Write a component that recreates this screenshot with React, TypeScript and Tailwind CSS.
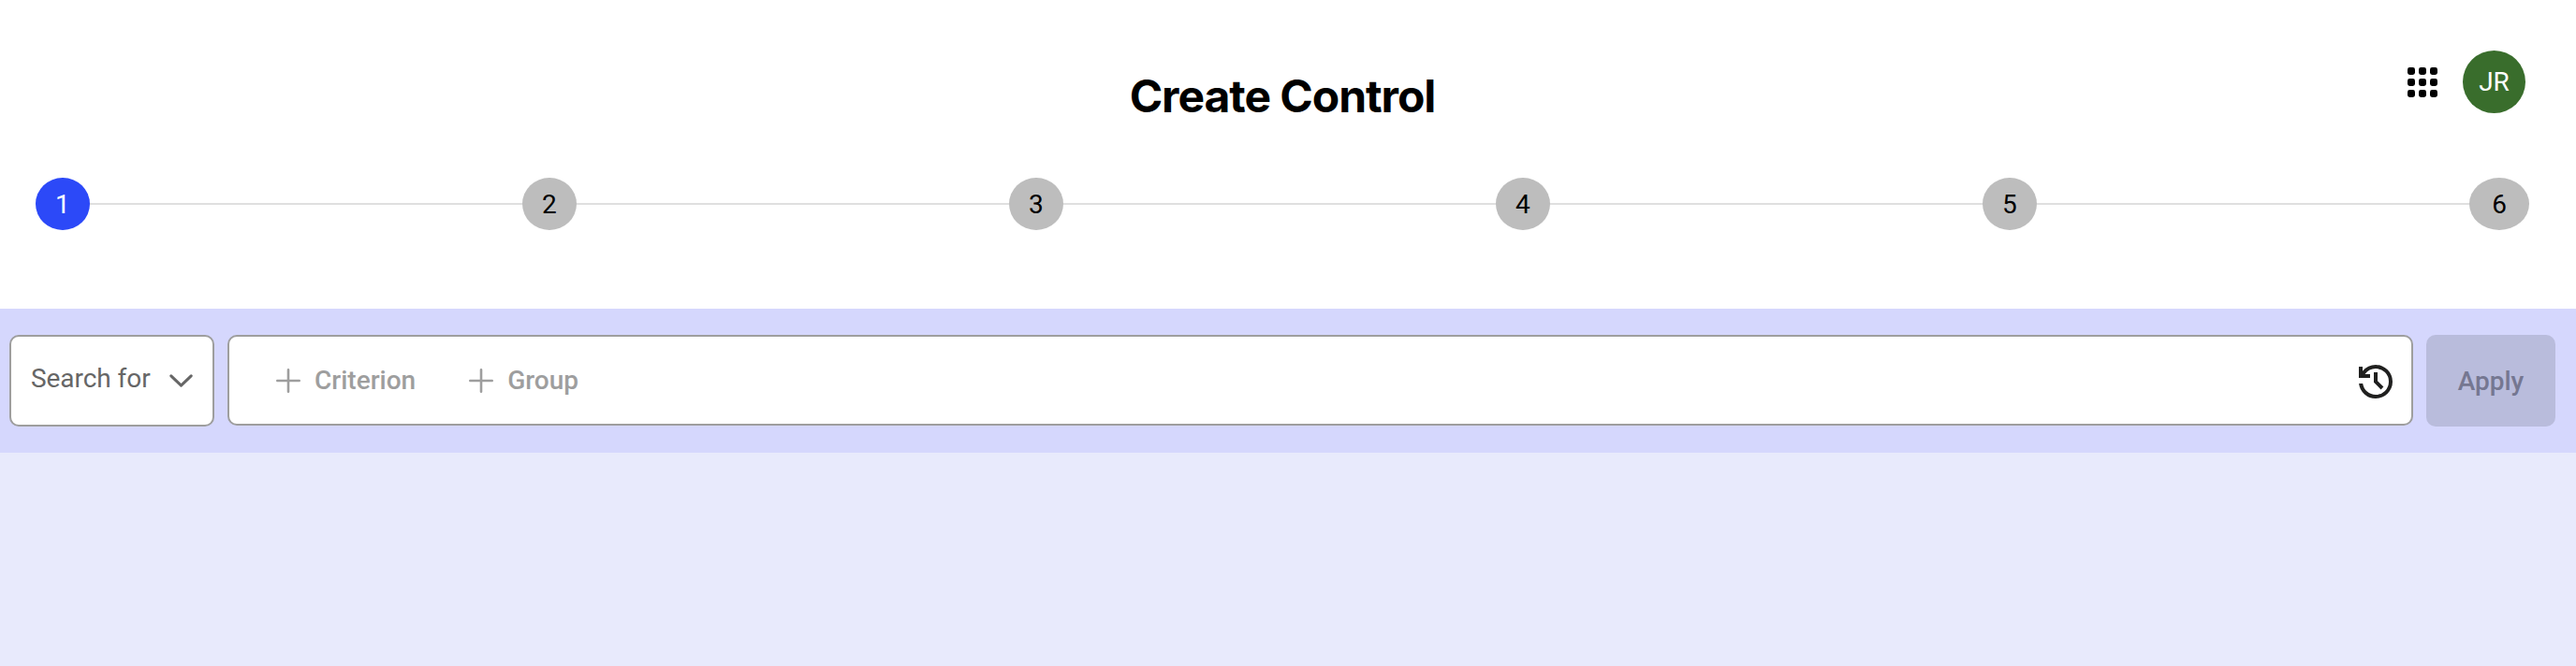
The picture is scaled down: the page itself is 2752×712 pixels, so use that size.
import React from "react";

const steps = [1, 2, 3, 4, 5];

function AppsIcon() {
  const cells = [0, 12, 24];
  return (
    <svg className="size-8" viewBox="0 0 32 32" fill="#000">
      {cells.map((y) => cells.map((x) => <rect key={`${x}-${y}`} x={x} y={y} width="8" height="8" rx="2.4" />))}
    </svg>
  );
}

function PlusIcon() {
  return (
    <svg className="size-[26px] shrink-0" viewBox="0 0 26 26" fill="none" stroke="#9e9e9e" strokeWidth="2.6" strokeLinecap="round">
      <path d="M13 1.3v23.4M1.3 13h23.4" />
    </svg>
  );
}

function HistoryIcon() {
  return (
    <svg className="size-12 shrink-0" viewBox="0 -960 960 960" fill="#20201f">
      <path d="M480-120q-138 0-240.5-91.5T122-440h82q14 104 92.5 172T480-200q117 0 198.5-81.5T760-480q0-117-81.5-198.5T480-760q-69 0-129 32t-101 88h110v80H120v-240h80v94q51-64 124.5-99T480-840q75 0 140.5 28.5t114 77q48.5 48.5 77 114T840-480q0 75-28.5 140.5t-77 114q-48.5 48.5-114 77T480-120Zm112-192L440-464v-216h80v184l128 128-56 56Z" />
    </svg>
  );
}

export default function App() {
  return (
    <div className="flex h-[712px] w-full flex-col bg-[#e8eafc] font-['Roboto',sans-serif] text-[28px] leading-8">
      <header className="flex h-[330px] flex-col bg-white">
        <div className="grid h-[190px] grid-cols-[1fr_auto_1fr] items-start pr-[54px] pl-[42px]">
          <div />
          <h1 className="pt-[74px] font-['Inter',sans-serif] text-[48px] leading-[58px] font-bold tracking-[-1.03px] text-black">Create Control</h1>
          <div className="flex items-center justify-end gap-[27px] pt-[54px]">
            <AppsIcon />
            <div className="flex size-[67px] items-center justify-center rounded-full bg-[#396d2c] text-white">JR</div>
          </div>
        </div>
        <ol className="flex items-center pr-[50px] pl-[38px]">
          {steps.map((n) => (
            <li key={n} className="flex flex-1 items-center">
              <span
                className={
                  n === 1
                    ? "flex h-14 w-[57.8px] items-center justify-center rounded-[50%] bg-[#2c49f8] pt-px text-white"
                    : "flex h-14 w-[57.8px] items-center justify-center rounded-[50%] bg-[#bdbdbd] pt-px text-black"
                }
              >
                {n}
              </span>
              <span className="h-[2px] flex-1 bg-[#dfdfdf]" />
            </li>
          ))}
          <li className="flex h-14 w-16 items-center justify-center rounded-[50%] bg-[#bdbdbd] pt-px text-black">6</li>
        </ol>
      </header>
      <section className="flex h-[154px] items-start bg-[#d5d7fd] pt-7 pr-[22px] pl-[10px]">
        <button className="flex h-[98px] w-[219px] items-center justify-between rounded-[10px] border-2 border-[#9e9e9e] bg-white pr-[21px] pb-1 pl-[21px] text-[#666]">
          <span className="tracking-[-0.05px]">Search for</span>
          <svg className="mt-1 h-[14px] w-[25px]" viewBox="0 0 25 14" fill="none" stroke="#666" strokeWidth="3" strokeLinecap="round" strokeLinejoin="round">
            <path d="M1.8 1.8l10.7 10.4L23.2 1.8" />
          </svg>
        </button>
        <div className="ml-[14px] flex h-[97px] flex-1 items-center rounded-[10px] border-2 border-[#9e9e9e] bg-white pt-px pr-[14px] pl-[50px] font-medium text-[#9e9e9e]">
          <button className="flex items-center gap-[15px]">
            <PlusIcon />
            <span>Criterion</span>
          </button>
          <button className="ml-[57px] flex items-center gap-[15px]">
            <PlusIcon />
            <span>Group</span>
          </button>
          <button className="mt-[2px] ml-auto" aria-label="History">
            <HistoryIcon />
          </button>
        </div>
        <button className="ml-[14px] flex h-[98px] w-[138px] items-center justify-center rounded-[10px] bg-[#b9bcdc] pt-px font-medium text-[#757791]">Apply</button>
      </section>
    </div>
  );
}
